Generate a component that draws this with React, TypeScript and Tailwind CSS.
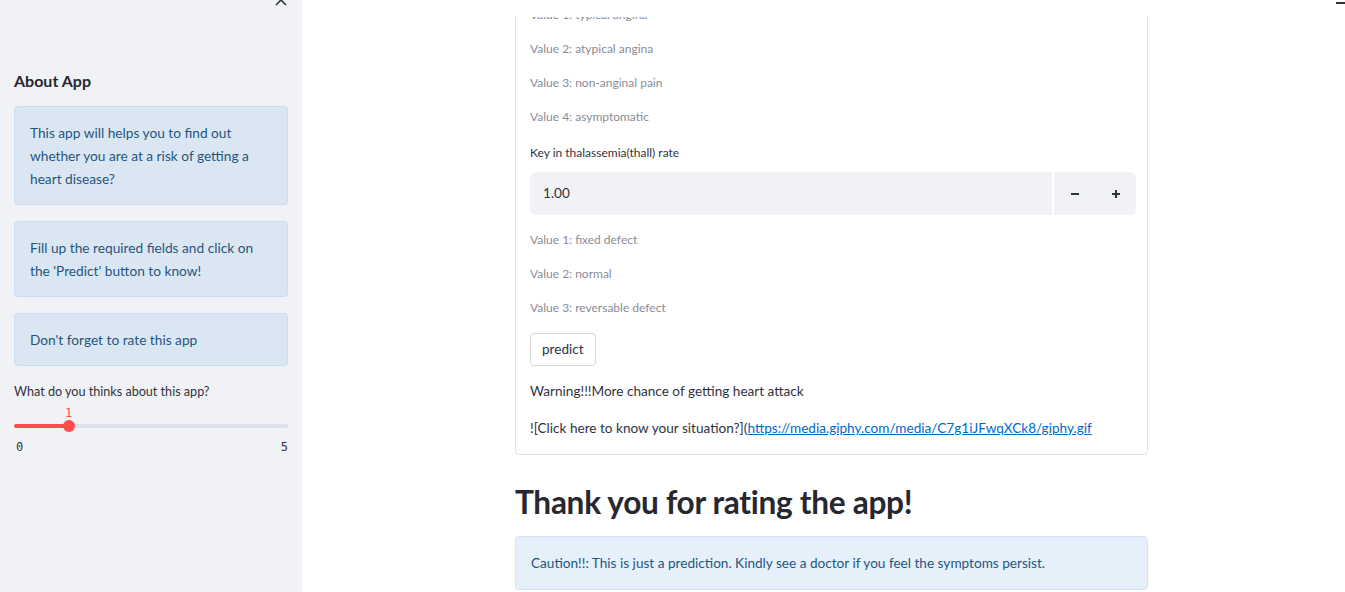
import React from "react";

const font = { fontFamily: '"Lato", "Liberation Sans", sans-serif' };
const mono = { fontFamily: '"DejaVu Sans Mono", monospace' };

function Info({ children }: { children: React.ReactNode }) {
  return (
    <div className="rounded-[4px] border border-[#c9dcf1] bg-[#dbe6f3] px-[15px] py-[14px] text-[13.7px] leading-[23px] text-[#1f5680]">
      {children}
    </div>
  );
}

function Help({ children }: { children: React.ReactNode }) {
  return <div className="h-[34px] flex items-center text-[12px] text-[#8a8c96]">{children}</div>;
}

export default function App() {
  return (
    <div className="flex w-[1345px] h-[592px] overflow-hidden bg-white text-[#31333f]" style={font}>
      {/* Sidebar */}
      <aside className="relative w-[302px] shrink-0 h-full bg-[#f0f2f6] px-[14px]">
        <svg className="absolute left-[274px] top-[-7px]" width="14" height="14" viewBox="0 0 14 14">
          <path d="M2 2 L12 12 M12 2 L2 12" stroke="#31333f" strokeWidth="1.6" fill="none" />
        </svg>
        <div className="pt-[70px] text-[16px] font-bold leading-[22px] text-[#262730]">About App</div>
        <div className="mt-[14px] flex flex-col gap-[16px]">
          <Info>
            This app will helps you to find out whether you are at a risk of getting a heart disease?
          </Info>
          <Info>
            Fill up the required fields and click on the 'Predict' button to know!
          </Info>
          <Info>Don't forget to rate this app</Info>
        </div>
        <div className="mt-[17px] text-[12.6px] leading-[18px] text-[#31333f]">What do you thinks about this app?</div>
        <div className="relative mt-[2px] h-[50px]">
          <div className="absolute left-[51px] top-[3px] text-[12px] leading-[14px] text-[#ff4b4b]" style={mono}>
            1
          </div>
          <div className="absolute left-0 right-0 top-[21px] h-[4px] rounded bg-[#dde1ea]" />
          <div className="absolute left-0 w-[55px] top-[21px] h-[4px] rounded bg-[#ff4b4b]" />
          <div className="absolute left-[49px] top-[17px] h-[12px] w-[12px] rounded-full bg-[#ff4b4b]" />
          <div className="absolute left-[2px] top-[37px] text-[12px] leading-[14px] text-[#31333f]" style={mono}>
            0
          </div>
          <div className="absolute right-0 top-[37px] text-[12px] leading-[14px] text-[#31333f]" style={mono}>
            5
          </div>
        </div>
      </aside>

      {/* Main */}
      <main className="relative flex-1 h-full">
        <div className="absolute left-0 right-0 top-0 h-[17px] bg-white z-10" />
        <div className="absolute right-0 top-[2px] h-[2px] w-[9px] bg-[#31333f] z-20" />
        <div className="ml-[213px] w-[633px] -mt-[4px]">
          <div className="rounded-[4px] border border-[#e1e2e6] pl-[14px] pr-[11px] pb-[14px] pt-[1px]">
            <Help>Value 1: typical angina</Help>
            <Help>Value 2: atypical angina</Help>
            <Help>Value 3: non-anginal pain</Help>
            <Help>Value 4: asymptomatic</Help>
            <div className="h-[38px] flex items-center text-[12px] text-[#31333f]">Key in thalassemia(thall) rate</div>
            <div className="flex h-[43px] rounded-[6px] bg-[#f0f2f6]">
              <div className="flex-1 flex items-center pl-[13px] text-[13.6px] border-r-2 border-white">1.00</div>
              <div className="w-[41px] flex items-center justify-center">
                <svg width="10" height="10" viewBox="0 0 10 10">
                  <path d="M1 5 H9" stroke="#31333f" strokeWidth="2" />
                </svg>
              </div>
              <div className="w-[41px] flex items-center justify-center">
                <svg width="10" height="10" viewBox="0 0 10 10">
                  <path d="M1 5 H9 M5 1 V9" stroke="#31333f" strokeWidth="2" />
                </svg>
              </div>
            </div>
            <div className="mt-[8px]">
              <Help>Value 1: fixed defect</Help>
              <Help>Value 2: normal</Help>
              <Help>Value 3: reversable defect</Help>
            </div>
            <div className="mt-[8px]">
              <button className="h-[33px] px-[11px] rounded-[4px] border border-[#d6d7dc] bg-white text-[13.6px] text-[#31333f]">
                predict
              </button>
            </div>
            <div className="mt-[13px] text-[13.6px] leading-[24px]">Warning!!!More chance of getting heart attack</div>
            <div className="mt-[13px] text-[13.6px] leading-[24px]">
              ![Click here to know your situation?](
              <span className="text-[#0068c9] underline">https://media.giphy.com/media/C7g1iJFwqXCk8/giphy.gif</span>
            </div>
          </div>
          <h1 className="mt-[27px] text-[31.6px] font-bold leading-[40px] text-[#262730] tracking-[-0.3px]">
            Thank you for rating the app!
          </h1>
          <div className="mt-[14px] rounded-[4px] border border-[#d3e4f6] bg-[#e6f0fb] px-[15px] py-[14px] text-[13.6px] leading-[24px] text-[#1f5680]">
            Caution!!: This is just a prediction. Kindly see a doctor if you feel the symptoms persist.
          </div>
        </div>
      </main>
    </div>
  );
}
